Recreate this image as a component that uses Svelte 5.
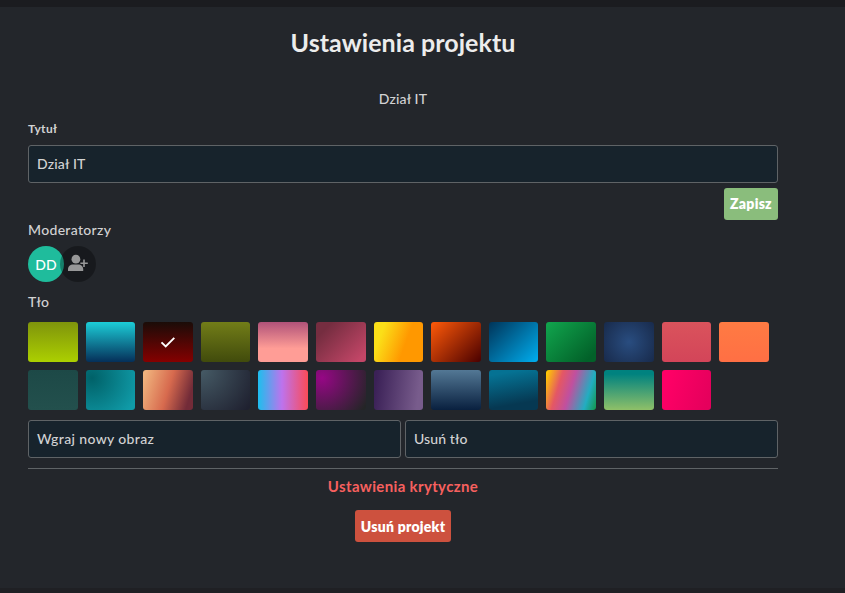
<script>
  const backgrounds = [
    'linear-gradient(#7f940c, #acd000)',
    'linear-gradient(#1cced8, #052f59)',
    'linear-gradient(#1a0c08, #850000)',
    'linear-gradient(#727d18, #414b0c)',
    'linear-gradient(#b05279, #ff9d96 66%)',
    'linear-gradient(135deg, #752d40 18%, #c24667 90%)',
    'linear-gradient(110deg, #fbdf18 18%, #ff9800 62%)',
    'linear-gradient(135deg, #ff5a09, #4a0000)',
    'linear-gradient(135deg, #003459, #00aeef)',
    'linear-gradient(135deg, #11a64e, #026129 88%)',
    'radial-gradient(circle, #294d80, #182a4b)',
    'linear-gradient(#da535c, #d34559)',
    'linear-gradient(#ff7b43, #ff6f44)',
    'linear-gradient(#1d4947, #23504d)',
    'radial-gradient(circle at 12% 20%, #006168, #109ba8 90%)',
    'linear-gradient(107deg, #f0b37d 5%, #d76a4e 50%, #722b38 88%)',
    'radial-gradient(circle at 0 0, #465b66, #1f2130 95%)',
    'linear-gradient(90deg, #1dbfed, #bd73ed 48%, #fb4b57)',
    'radial-gradient(circle at 12% 20%, #960785, #232526 95%)',
    'linear-gradient(97deg, #3b2157 6%, #785c8c 88%)',
    'linear-gradient(#537895, #09203f)',
    'linear-gradient(170deg, #057293 12%, #063852 80%)',
    'linear-gradient(107deg, #ffca00 2%, #e45764 28%, #c0509f 49%, #22adc1 80%, #159957 98%)',
    'linear-gradient(#00827f 10%, #8fc068)',
    'linear-gradient(107deg, #ff0066 11%, #e5005c 91%)'
  ];
  let selected = $state(2);
  let title = $state('Dział IT');
</script>

<main>
  <section class="panel">
    <h1>Ustawienia projektu</h1>
    <p class="name">Dział IT</p>
    <label for="title">Tytuł</label>
    <input id="title" class="field" bind:value={title} />
    <div class="actions"><button class="save">Zapisz</button></div>
    <h2 class="mods">Moderatorzy</h2>
    <div class="avatars">
      <span class="avatar">DD</span>
      <button class="add" aria-label="Dodaj moderatora">
        <svg width="36" height="36" viewBox="0 0 36 36" fill="#979798">
          <circle cx="15.900" cy="13.200" r="4.400" />
          <path d="M8 25v-1.700c0-2.800 2.400-4.700 5-4.700h5.200c2.600 0 5 1.900 5 4.700V25z" />
          <path d="M23.200 13.600h1.600v2.900h3v1.600h-3V21h-1.600v-2.900h-2.800v-1.600h2.800z" />
        </svg>
      </button>
    </div>
    <h2 class="bg">Tło</h2>
    <div class="swatches">
      {#each backgrounds as background, i}
        <button class="swatch" style:background aria-label="Tło {i + 1}" onclick={() => (selected = i)}>
          {#if selected === i}
            <svg width="16" height="12" viewBox="0 0 16 12"><path d="M1.500 6.300 5.700 10.500 14.300 1.800" fill="none" stroke="#fff" stroke-width="1.900" /></svg>
          {/if}
        </button>
      {/each}
    </div>
    <div class="options">
      <button class="field upload">Wgraj nowy obraz</button>
      <button class="field clear">Usuń tło</button>
    </div>
    <hr />
    <h3>Ustawienia krytyczne</h3>
    <button class="delete">Usuń projekt</button>
  </section>
</main>

<style>
  :global(body) { background: #1b1c20; }
  main {
    box-sizing: border-box;
    height: 593px;
    border-top: 7px solid #1b1c20;
    border-bottom: 5px solid #1f2024;
    background: #23262b;
    color: #d2d2d3;
    font: 500 14px/20px Lato, "Noto Sans", sans-serif;
    overflow: hidden;
  }
  .panel {
    display: flex;
    flex-direction: column;
    width: 750px;
    margin-left: 28px;
  }
  h1, h2, h3, p { margin: 0; }
  h1 { margin-top: 19px; text-align: center; font-size: 25px; line-height: 32px; font-weight: 700; letter-spacing: .05px; color: #ececec; }
  .name { margin-top: 31px; text-align: center; letter-spacing: .2px; }
  label { margin-top: 10px; font-size: 12px; font-weight: 700; line-height: 20px; letter-spacing: .3px; }
  button { font-family: inherit; border: 0; padding: 0; cursor: pointer; }
  .field {
    box-sizing: border-box;
    height: 38px;
    padding: 0 8px;
    border: 1px solid #5f6366;
    border-radius: 3px;
    background: #17232c;
    color: #d2d2d3;
    font: 500 14px/20px Lato, "Noto Sans", sans-serif;
    letter-spacing: .2px;
    text-align: left;
    outline: none;
  }
  #title { margin-top: 6px; padding-bottom: 2px; }
  .upload { letter-spacing: .37px; }
  .actions { display: flex; justify-content: flex-end; margin-top: 5px; }
  .save, .delete { height: 32px; border-radius: 3px; color: #fff; font-size: 14px; font-weight: 800; letter-spacing: .25px; white-space: nowrap; }
  .save { width: 54px; padding-bottom: 1px; background: #8abd7c; }
  h2 { font-size: 14px; line-height: 20px; font-weight: 500; }
  .mods { letter-spacing: .32px; }
  .avatars { display: flex; margin-top: 6px; height: 36px; }
  .avatar, .add { width: 36px; height: 36px; border-radius: 50%; }
  .avatar { background: #1fbc9c; color: #fff; line-height: 38px; text-align: center; font-size: 14px; }
  .add { margin-left: -4px; background: rgba(0, 0, 0, .32); }
  .add svg { display: block; }
  .bg { margin-top: 10px; letter-spacing: .2px; }
  .swatches { display: flex; flex-wrap: wrap; gap: 8px; margin-top: 10px; }
  .swatch { display: flex; align-items: center; justify-content: center; width: 49.600px; height: 40px; border-radius: 3px; }
  .options { display: flex; gap: 4px; margin-top: 10px; }
  .options .field { flex: 1 1 0; }
  .clear { letter-spacing: .1px; }
  hr { width: 100%; margin: 10px 0 0; border: 0; border-top: 1px solid #5f6366; }
  h3 { margin-top: 7px; text-align: center; font-size: 15px; line-height: 20px; letter-spacing: .35px; color: #f7605f; }
  .delete { align-self: center; width: 96px; margin-top: 14px; background: #cd513e; }
</style>
